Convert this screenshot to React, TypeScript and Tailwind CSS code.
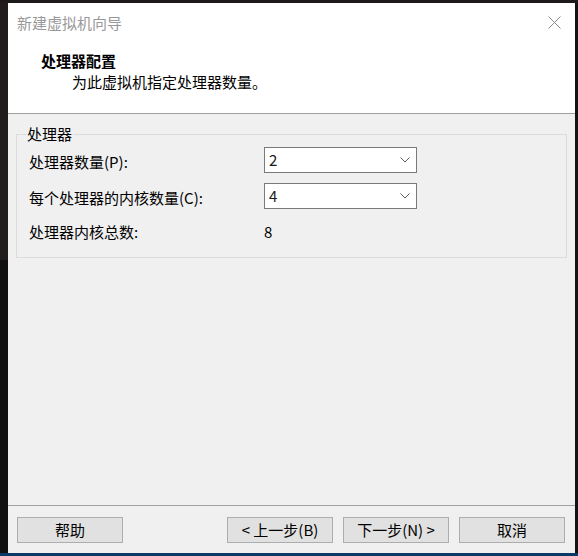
import React from "react";

const font = { fontFamily: '"Noto Sans CJK SC", "Noto Sans", sans-serif' };

function Combo({ value }: { value: string }) {
  return (
    <div className="flex h-[26px] w-[153px] items-center justify-between border border-[#7a7a7a] bg-white pl-[4px] pr-[6px]">
      <span className="text-[15px] leading-[20px] text-[#1a1a1a]">{value}</span>
      <svg width="10" height="6" viewBox="0 0 10 6" className="text-[#606060]">
        <path d="M0.5 0.5 L5 5 L9.5 0.5" fill="none" stroke="currentColor" strokeWidth="1" />
      </svg>
    </div>
  );
}

function Btn({ children }: { children: React.ReactNode }) {
  return (
    <button className="flex h-[26px] w-[106px] items-center justify-center border border-[#adadad] bg-[#e1e1e1] text-[15px] leading-[20px] text-black">
      {children}
    </button>
  );
}

export default function App() {
  return (
    <div className="flex h-[556px] w-[578px] flex-col bg-[#1c1919]" style={font}>
      <div className="h-[3px] bg-[#1e1a1a]" />
      <div className="flex flex-1">
        <div className="flex w-[8px] flex-col">
          <div className="h-[257px] bg-[#211d1d]" />
          <div className="flex-1 bg-[#101010]" />
        </div>

        <div className="flex w-[567px] flex-col">
          {/* title bar */}
          <div className="flex h-[39px] items-center justify-between bg-white pl-[9px] pr-[14px]">
            <span className="text-[15px] leading-[20px] text-[#999999]">新建虚拟机向导</span>
            <svg width="13" height="13" viewBox="0 0 13 13" className="text-[#8a8a8a]">
              <path d="M0.5 0.5 L12.5 12.5 M12.5 0.5 L0.5 12.5" stroke="currentColor" strokeWidth="1" />
            </svg>
          </div>

          {/* header */}
          <div className="h-[71px] bg-white pl-[33px] pt-[8px]">
            <div className="text-[15px] font-bold leading-[21px] text-black">处理器配置</div>
            <div className="pl-[31px] text-[15px] leading-[21px] text-black">为此虚拟机指定处理器数量。</div>
          </div>
          <div className="h-px bg-[#a0a0a0]" />

          {/* body */}
          <div className="flex-1 bg-[#f0f0f0] px-[8px] pt-[10px]">
            <fieldset className="border border-[#dcdcdc] pb-[12px]">
              <legend className="ml-[9px] px-[1px] text-[15px] leading-[20px] text-black">处理器</legend>
              <div className="mt-[3px] flex flex-col gap-[10px] pl-[12px]">
                <div className="flex h-[26px] items-center">
                  <span className="w-[235px] pt-[3px] text-[15px] leading-[20px] text-black">处理器数量(P):</span>
                  <Combo value="2" />
                </div>
                <div className="flex h-[26px] items-center">
                  <span className="w-[235px] pt-[3px] text-[15px] leading-[20px] text-black">每个处理器的内核数量(C):</span>
                  <Combo value="4" />
                </div>
                <div className="flex h-[26px] items-center">
                  <span className="w-[235px] text-[15px] leading-[20px] text-black">处理器内核总数:</span>
                  <span className="text-[15px] leading-[20px] text-black">8</span>
                </div>
              </div>
            </fieldset>
          </div>

          <div className="h-px bg-[#a0a0a0]" />
          {/* footer */}
          <div className="flex h-[47px] items-start bg-[#f0f0f0] pl-[9px] pr-[10px] pt-[11px]">
            <Btn>帮助</Btn>
            <div className="flex-1" />
            <div className="flex gap-[10px]">
              <Btn>&lt; 上一步(B)</Btn>
              <Btn>下一步(N) &gt;</Btn>
              <Btn>取消</Btn>
            </div>
          </div>
        </div>

        <div className="w-[3px] bg-[#141212]" />
      </div>
      <div className="h-[3px] bg-[#0c3a68]" />
    </div>
  );
}
